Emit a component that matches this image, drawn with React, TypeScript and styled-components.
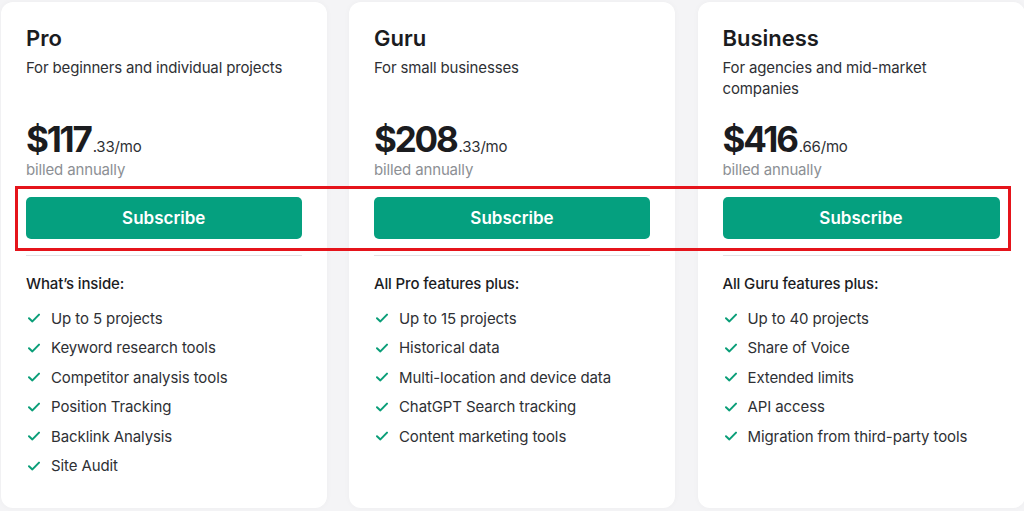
import React from "react";
import styled, { createGlobalStyle } from "styled-components";

const Global = createGlobalStyle`
  html, body { margin: 0; padding: 0; background: #ffffff; }
  body { font-family: Inter, "Noto Sans", Arial, sans-serif; -webkit-font-smoothing: antialiased; }
  * { box-sizing: border-box; }
`;

const Page = styled.div`
  position: relative;
  width: 1024px;
  height: 511px;
  overflow: hidden;
  background: #f4f4f6;
  padding: 2px 0 0 1px;
`;

const Grid = styled.div`
  display: grid;
  grid-template-columns: 325.5px 326px 327px;
  column-gap: 22.5px;
`;

const Card = styled.div`
  background: #ffffff;
  border-radius: 12px;
  height: 506px;
  padding: 22px 25px 0 25px;
  display: flex;
  flex-direction: column;
  box-shadow: 0 0 6px rgba(0, 0, 0, 0.03);
`;

const Title = styled.h2`
  margin: 0;
  font-size: 22px;
  line-height: 28px;
  font-weight: 600;
  color: #1b1c1f;
`;

const Subtitle = styled.p`
  margin: 5px 0 0;
  max-width: 262px;
  min-height: 42px;
  font-size: 15px;
  line-height: 21px;
  letter-spacing: -0.15px;
  color: #2e3034;
`;

const PriceRow = styled.div`
  margin-top: 20px;
  display: flex;
  align-items: baseline;
  color: #1b1c1f;
`;

const PriceMain = styled.span`
  font-size: 35px;
  line-height: 40px;
  font-weight: 700;
  letter-spacing: -2.2px;
  margin-right: 2px;
`;

const PriceCents = styled.span`
  font-size: 15px;
  letter-spacing: -0.2px;
  color: #2e3034;
`;

const Billed = styled.div`
  font-size: 15px;
  line-height: 21px;
  letter-spacing: -0.15px;
  color: #8c8f94;
`;

const Button = styled.button`
  margin-top: 17px;
  height: 42px;
  width: 100%;
  border: none;
  border-radius: 5px;
  background: #05a07f;
  color: #ffffff;
  font-family: inherit;
  font-size: 17px;
  font-weight: 600;
  cursor: pointer;
`;

const Divider = styled.hr`
  margin: 16px 0 0;
  border: none;
  border-top: 1px solid #e1e2e4;
`;

const ListHead = styled.div`
  margin-top: 17px;
  font-size: 15px;
  line-height: 21px;
  font-weight: 500;
  letter-spacing: -0.15px;
  color: #1b1c1f;
`;

const List = styled.ul`
  margin: 13.5px 0 0;
  padding: 0;
  list-style: none;
  display: flex;
  flex-direction: column;
  gap: 8.5px;
`;

const Item = styled.li`
  display: flex;
  align-items: center;
  gap: 11px;
  padding-left: 2px;
  font-size: 15px;
  line-height: 21px;
  letter-spacing: -0.1px;
  color: #2e3034;
`;

const Highlight = styled.div`
  position: absolute;
  left: 15px;
  top: 186px;
  width: 996px;
  height: 65px;
  border: 3px solid #e5141b;
  pointer-events: none;
`;

const Check = () => (
  <svg width="12" height="10" viewBox="0 0 12 10" fill="none">
    <path d="M1 5.2 L4.4 8.4 L11 1.6" stroke="#0a9e78" strokeWidth="2" strokeLinecap="round" strokeLinejoin="round" />
  </svg>
);

type Plan = {
  name: string;
  sub: string;
  dollars: string;
  cents: string;
  head: string;
  items: string[];
};

const plans: Plan[] = [
  {
    name: "Pro",
    sub: "For beginners and individual projects",
    dollars: "$117",
    cents: ".33/mo",
    head: "What’s inside:",
    items: [
      "Up to 5 projects",
      "Keyword research tools",
      "Competitor analysis tools",
      "Position Tracking",
      "Backlink Analysis",
      "Site Audit",
    ],
  },
  {
    name: "Guru",
    sub: "For small businesses",
    dollars: "$208",
    cents: ".33/mo",
    head: "All Pro features plus:",
    items: [
      "Up to 15 projects",
      "Historical data",
      "Multi-location and device data",
      "ChatGPT Search tracking",
      "Content marketing tools",
    ],
  },
  {
    name: "Business",
    sub: "For agencies and mid-market companies",
    dollars: "$416",
    cents: ".66/mo",
    head: "All Guru features plus:",
    items: [
      "Up to 40 projects",
      "Share of Voice",
      "Extended limits",
      "API access",
      "Migration from third-party tools",
    ],
  },
];

export default function App() {
  return (
    <>
      <Global />
      <Page>
        <Grid>
          {plans.map((p) => (
            <Card key={p.name}>
              <Title>{p.name}</Title>
              <Subtitle>{p.sub}</Subtitle>
              <PriceRow>
                <PriceMain>{p.dollars}</PriceMain>
                <PriceCents>{p.cents}</PriceCents>
              </PriceRow>
              <Billed>billed annually</Billed>
              <Button>Subscribe</Button>
              <Divider />
              <ListHead>{p.head}</ListHead>
              <List>
                {p.items.map((it) => (
                  <Item key={it}>
                    <Check />
                    <span>{it}</span>
                  </Item>
                ))}
              </List>
            </Card>
          ))}
        </Grid>
        <Highlight />
      </Page>
    </>
  );
}
